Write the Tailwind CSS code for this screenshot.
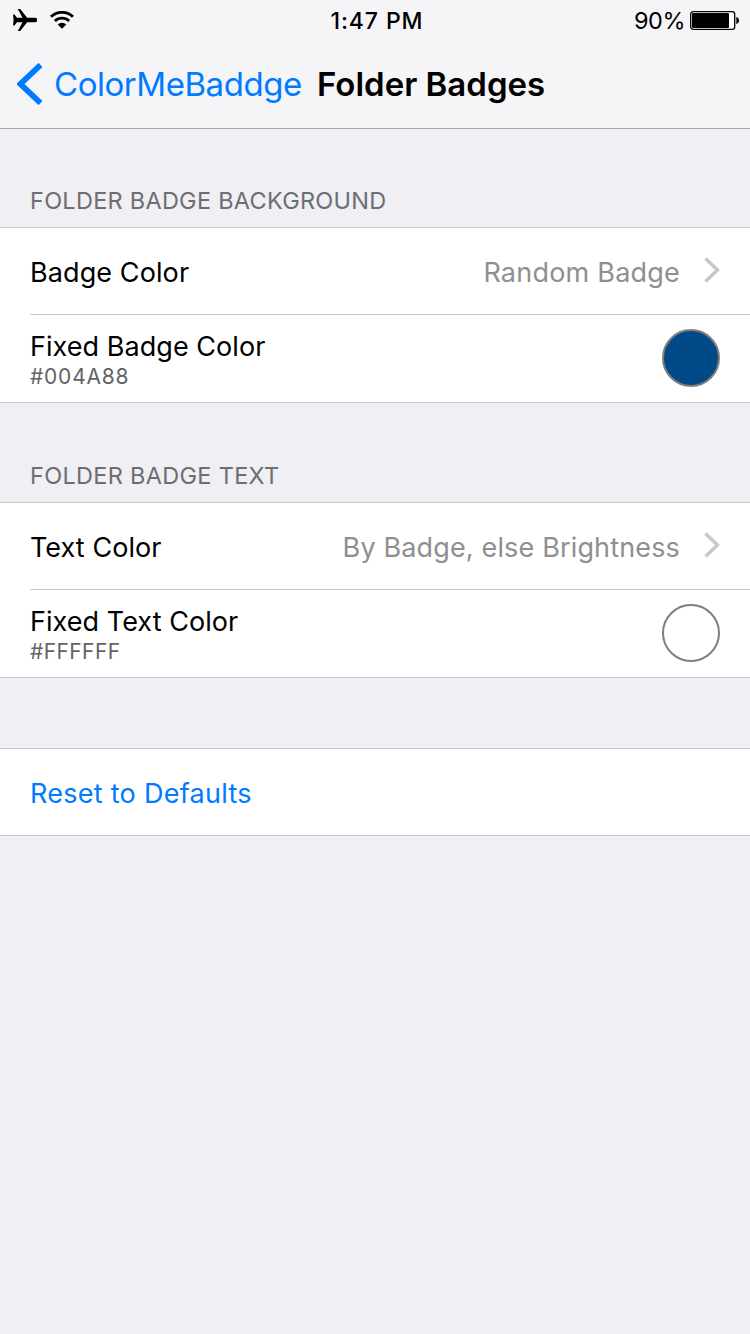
<!DOCTYPE html>
<html lang="en">
<head>
<meta charset="utf-8">
<title>Folder Badges</title>
<script src="https://cdn.jsdelivr.net/npm/@tailwindcss/browser@4"></script>
</head>
<body class="h-[1334px] w-[750px] overflow-hidden bg-[#efeff4] font-['Inter','Liberation_Sans',sans-serif] text-black">
<header class="h-[129px] border-b border-[#a7a7aa] bg-[#f5f5f7]">
  <div class="grid h-10 grid-cols-3 items-center">
    <div class="flex items-center gap-[13px] pl-[13px]">
      <svg class="h-[22px] w-6" viewBox="0 0 24 22"><path d="M0 5.500h1.500l2.500 3.300h5.500L4.800 0h2.500l6.800 8.800h8a2.200 2.200 0 0 1 0 4.400h-8L7.300 22H4.800l4.700-8.800H4L1.500 16.500H0l.6-5.500z"/></svg>
      <svg class="h-[18px] w-6" viewBox="0 0 24 18"><g fill="none" stroke="#000" stroke-width="2.800"><path d="M1 5.800a15.700 15.700 0 0 1 22 0"/><path d="M4.900 10.100a10.200 10.200 0 0 1 14.200 0"/></g><path d="M12 17.800 7.700 13.500a6 6 0 0 1 8.600 0z"/></svg>
    </div>
    <div class="pl-1 pt-0.5 text-center text-[23px] font-[550] leading-[38px] tracking-[0.9px]">1:47 PM</div>
    <div class="flex items-center justify-end gap-[5px] pr-[11px]">
      <span class="pt-0.5 text-[23.500px] leading-[38px] tracking-[-0.5px]">90%</span>
      <svg class="h-[19px] w-[49px]" viewBox="0 0 49 19"><rect x=".7" y=".7" width="44" height="17.600" rx="2.600" fill="#fff" stroke="#000" stroke-width="1.300"/><rect x="2" y="2" width="37" height="15" rx="1"/><path d="M46.300 6c3.600.8 3.600 6.200 0 7z"/></svg>
    </div>
  </div>
  <div class="flex h-[88px] items-center pl-[17px]">
    <svg class="h-[42px] w-[26px]" viewBox="0 0 26 42"><path d="M23.500 2 3.500 21l20 19" fill="none" stroke="#007aff" stroke-width="5.800"/></svg>
    <span class="ml-[11px] w-[263px] whitespace-nowrap pt-0.5 text-[33px] tracking-[-0.46px] text-[#007aff]">ColorMeBaddge</span>
    <h1 class="whitespace-nowrap pt-0.5 text-[33px] font-semibold tracking-[0px]">Folder Badges</h1>
  </div>
</header>
<main>
  <h2 class="h-[98px] pl-[30px] pt-[54px] text-[23.500px] leading-9 tracking-[0.26px] text-[#6d6d72]">FOLDER BADGE BACKGROUND</h2>
  <section class="border-y border-[#c8c7cc] bg-white">
    <div class="ml-[30px] flex h-[87px] items-center border-b border-[#c8c7cc] pr-[30px] text-[27px]">
      <span class="flex-1 pt-1 tracking-[0.1px]">Badge Color</span>
      <span class="pt-1 tracking-[0.22px] text-[#8e8e93]">Random Badge</span>
      <svg class="mb-0.5 ml-6 h-[26px] w-4" viewBox="0 0 16 26"><path d="m1.500 1.500 12 11.500-12 11.500" fill="none" stroke="#c7c7cc" stroke-width="3.500"/></svg>
    </div>
    <div class="ml-[30px] flex h-[87px] items-center justify-between pb-0.5 pr-[30px]">
      <div class="pt-1"><div class="text-[27px] leading-[34px] tracking-[0.05px]">Fixed Badge Color</div><div class="text-[21px] leading-[26px] tracking-[0.78px] text-[#636366]">#004A88</div></div>
      <div class="size-[58px] rounded-full border-2 border-[#7f7f7f] bg-[#004a88]"></div>
    </div>
  </section>
  <h2 class="h-[99px] pl-[30px] pt-[55px] text-[23.500px] leading-9 tracking-[0.3px] text-[#6d6d72]">FOLDER BADGE TEXT</h2>
  <section class="border-y border-[#c8c7cc] bg-white">
    <div class="ml-[30px] flex h-[87px] items-center border-b border-[#c8c7cc] pr-[30px] text-[27px]">
      <span class="flex-1 pt-1 tracking-[0.05px]">Text Color</span>
      <span class="pt-1 tracking-[0.15px] text-[#8e8e93]">By Badge, else Brightness</span>
      <svg class="mb-0.5 ml-6 h-[26px] w-4" viewBox="0 0 16 26"><path d="m1.500 1.500 12 11.500-12 11.500" fill="none" stroke="#c7c7cc" stroke-width="3.500"/></svg>
    </div>
    <div class="ml-[30px] flex h-[87px] items-center justify-between pb-0.5 pr-[30px]">
      <div class="pt-1"><div class="text-[27px] leading-[34px] tracking-[0.05px]">Fixed Text Color</div><div class="text-[21px] leading-[26px] tracking-[0.4px] text-[#636366]">#FFFFFF</div></div>
      <div class="size-[58px] rounded-full border-2 border-[#7f7f7f] bg-white"></div>
    </div>
  </section>
  <section class="mt-[70px] flex h-[88px] items-center border-y border-[#c8c7cc] bg-white pl-[30px] pt-1">
    <button class="text-[27px] tracking-[0.27px] text-[#007aff]">Reset to Defaults</button>
  </section>
</main>
</body>
</html>
